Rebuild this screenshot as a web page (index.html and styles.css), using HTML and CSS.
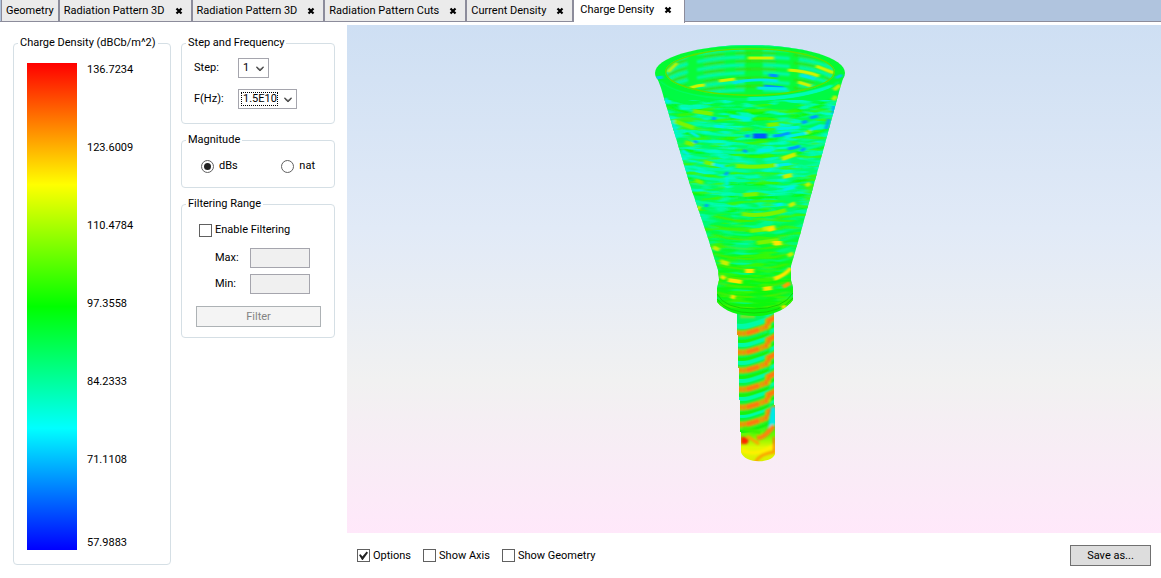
FILE: index.html
```html
<!DOCTYPE html>
<html lang="en">
<head>
<meta charset="utf-8">
<title>Charge Density</title>
<link rel="stylesheet" href="styles.css">
</head>
<body>
<svg class="defs" aria-hidden="true">
  <symbol id="close" viewBox="0 0 8 8"><path d="M1.5 1.5 6.5 6.5M6.5 1.5 1.5 6.5" fill="none" stroke="#000" stroke-width="2.2"/></symbol>
  <symbol id="chevron" viewBox="0 0 8 6"><path d="M.8 .8V2L4 5 7.200 2V.8L4 3.600Z" fill="#555" stroke="#555" stroke-width="1"/></symbol>
</svg>
<nav class="tabs" role="tablist">
  <div class="tab tab-first"><button class="tab-name" role="tab">Geometry</button></div>
  <div class="tab"><button class="tab-name" role="tab">Radiation Pattern 3D</button><button class="tab-close" aria-label="Close"><svg><use href="#close"/></svg></button></div>
  <div class="tab"><button class="tab-name" role="tab">Radiation Pattern 3D</button><button class="tab-close" aria-label="Close"><svg><use href="#close"/></svg></button></div>
  <div class="tab"><button class="tab-name" role="tab">Radiation Pattern Cuts</button><button class="tab-close" aria-label="Close"><svg><use href="#close"/></svg></button></div>
  <div class="tab"><button class="tab-name" role="tab">Current Density</button><button class="tab-close" aria-label="Close"><svg><use href="#close"/></svg></button></div>
  <div class="tab active"><button class="tab-name" role="tab" aria-selected="true">Charge Density</button><button class="tab-close" aria-label="Close"><svg><use href="#close"/></svg></button></div>
</nav>
<main class="workspace">
  <aside class="side">
    <fieldset class="group scale">
      <legend>Charge Density (dBCb/m^2)</legend>
      <div class="scale-body">
        <div class="scale-bar"></div>
        <div class="scale-labels"><span>136.7234</span><span>123.6009</span><span>110.4784</span><span>97.3558</span><span>84.2333</span><span>71.1108</span><span class="scale-min">57.9883</span></div>
      </div>
    </fieldset>
    <div class="controls">
      <fieldset class="group step">
        <legend>Step and Frequency</legend>
        <div class="step-rows">
          <label for="step">Step:</label>
          <span class="combo"><select id="step"><option>1</option></select><svg class="arrow"><use href="#chevron"/></svg></span>
          <label for="freq">F(Hz):</label>
          <span class="combo combo-wide focused"><select id="freq"><option>1.5E10</option></select><svg class="arrow"><use href="#chevron"/></svg></span>
        </div>
      </fieldset>
      <fieldset class="group magnitude">
        <legend>Magnitude</legend>
        <div class="radios">
          <label class="choice"><input type="radio" name="mag" checked>dBs</label>
          <label class="choice"><input type="radio" name="mag">nat</label>
        </div>
      </fieldset>
      <fieldset class="group filtering">
        <legend>Filtering Range</legend>
        <label class="choice"><input type="checkbox">Enable Filtering</label>
        <div class="limits">
          <label for="max">Max:</label><input class="field" id="max" type="text" disabled>
          <label for="min">Min:</label><input class="field" id="min" type="text" disabled>
        </div>
        <button class="button filter" disabled>Filter</button>
      </fieldset>
    </div>
  </aside>
  <section class="viewer">
    <div class="scene">
      <svg class="horn" viewBox="654 40 200 425" role="img" aria-label="Horn antenna charge density">
        <defs>
          <linearGradient id="skin" x1="0" y1="45" x2="0" y2="316" gradientUnits="userSpaceOnUse">
            <stop offset="0" stop-color="#00fb38"/><stop offset=".25" stop-color="#00fb48"/><stop offset=".45" stop-color="#00fb74"/><stop offset=".65" stop-color="#00fb4c"/><stop offset=".85" stop-color="#0cfb10"/><stop offset="1" stop-color="#0cf60c"/>
          </linearGradient>
          <linearGradient id="tube" x1="0" y1="315" x2="0" y2="462" gradientUnits="userSpaceOnUse">
            <stop offset="0" stop-color="#00f860"/><stop offset=".72" stop-color="#08f838"/><stop offset=".82" stop-color="#6cf800"/><stop offset=".9" stop-color="#e0f800"/><stop offset="1" stop-color="#d8f000"/>
          </linearGradient>
          <linearGradient id="fade" x1="0" y1="100" x2="0" y2="290" gradientUnits="userSpaceOnUse">
            <stop offset="0" stop-color="#fff"/><stop offset=".5" stop-color="#ccc"/><stop offset="1" stop-color="#222"/>
          </linearGradient>
          <mask id="upper"><path d="M650 40H850V320H650Z" fill="url(#fade)"/></mask>
          <filter id="soft" x="-10%" y="-10%" width="120%" height="120%"><feGaussianBlur stdDeviation="3 .5"/></filter>
          <filter id="spot" x="-10%" y="-10%" width="120%" height="120%"><feGaussianBlur stdDeviation="1.8 .7"/></filter>
          <filter id="fine" x="-10%" y="-10%" width="120%" height="120%"><feGaussianBlur stdDeviation=".8"/></filter>
          <filter id="cool" x="0" y="0" width="100%" height="100%" color-interpolation-filters="sRGB"><feTurbulence type="fractalNoise" baseFrequency=".045 .2" numOctaves="2" seed="4"/><feColorMatrix values="0 0 0 0 0  0 0 0 0 .98  0 0 0 0 .86  5 0 0 0 -2.3"/></filter>
          <filter id="warm" x="0" y="0" width="100%" height="100%" color-interpolation-filters="sRGB"><feTurbulence type="fractalNoise" baseFrequency=".04 .22" numOctaves="2" seed="11"/><feColorMatrix values="0 0 0 0 .25  0 0 0 0 .97  0 0 0 0 0  5 0 0 0 -2.6"/></filter>
          <clipPath id="body"><path d="M655 72C657 88 690 98 750 98S842 88 845 72L839 92 814 184 800 235 791 266 791 280 793 287V300C786 310 772 316 755 316S724 311 717 302V288L719 280 718 270 707 235 690 185 661 88Z"/></clipPath>
          <clipPath id="rim"><ellipse cx="750" cy="73" rx="95" ry="28"/></clipPath>
          <clipPath id="inside"><ellipse cx="750" cy="72" rx="85" ry="24"/></clipPath>
          <clipPath id="stem"><path d="M737 312H774V405H775V454C772 464 744 464 741 452V432H740V400H739V368H738V335H737Z"/></clipPath>
          <path id="ring" d="M648 0Q665 26 750 27T852 -3"/>
          <path id="ringlow" d="M690 0Q713 18 753 18T818 -5"/>
          <path id="back" d="M664 18C682 -4 815 -7 836 15"/>
          <path id="turn" d="M733 1Q741 4 751 1T763 -3L768 -5V-10L778 -15"/>
        </defs>
        <g clip-path="url(#stem)">
          <path d="M730 310H780V465H730Z" fill="url(#tube)"/>
          <g fill="none" stroke="#00fba8" stroke-width="5" filter="url(#spot)">
            <use href="#turn" y="324"/><use href="#turn" y="342"/><use href="#turn" y="360"/><use href="#turn" y="378"/><use href="#turn" y="396"/><use href="#turn" y="413"/>
          </g>
          <g fill="none" stroke="#18f410" stroke-width="3" filter="url(#spot)">
            <use href="#turn" y="339"/><use href="#turn" y="357"/><use href="#turn" y="375"/><use href="#turn" y="393"/><use href="#turn" y="411"/><use href="#turn" y="429"/>
          </g>
          <g fill="none" stroke="#a8ec00" stroke-width="6" filter="url(#fine)">
            <use href="#turn" y="331"/><use href="#turn" y="350"/><use href="#turn" y="368"/><use href="#turn" y="387"/><use href="#turn" y="405"/><use href="#turn" y="422"/>
          </g>
          <g fill="none" stroke="#ff7808" stroke-width="5" stroke-dasharray="3 1 4 1 3 1 14 1" filter="url(#fine)">
            <use href="#turn" y="331"/><use href="#turn" y="350"/><use href="#turn" y="368"/><use href="#turn" y="387"/><use href="#turn" y="405"/><use href="#turn" y="422"/>
          </g>
          <g filter="url(#fine)">
            <path d="M740 315h15v3h-15z" fill="#8cdb28"/>
            <path d="M771 407h5v17l-8 4z" fill="#00e8e8"/>
            <path d="M757 438q9-2 11-6l6-6" fill="none" stroke="#ff8208" stroke-width="5"/>
            <path d="M743 429q12 1 18 5" fill="none" stroke="#3cf400" stroke-width="4"/>
            <path d="M741 437h4l4 3-2 4h-6z" fill="#ff2800"/>
            <path d="M747 436l12 8" fill="none" stroke="#ffa400" stroke-width="3"/>
            <path d="M741 450q15 7 33-4" fill="none" stroke="#fff000" stroke-width="4"/>
            <path d="M755 463q5-10 20-11" fill="none" stroke="#ffa000" stroke-width="3"/>
            <path d="M774 437v14" stroke="#ff6a10" stroke-width="2"/>
          </g>
        </g>
        <g clip-path="url(#body)">
          <path d="M650 45H850V320H650Z" fill="url(#skin)"/>
          <g fill="none" filter="url(#soft)">
            <g stroke="#00fba0" stroke-width="3" stroke-dasharray="38 9 61 17 22 13">
              <use href="#ring" y="93"/><use href="#ring" y="101"/><use href="#ring" y="109"/><use href="#ring" y="117"/><use href="#ring" y="126"/><use href="#ring" y="135"/><use href="#ring" y="144"/><use href="#ring" y="154"/><use href="#ring" y="168"/><use href="#ring" y="179"/>
            </g>
            <g stroke="#00f8d0" stroke-width="2" stroke-dasharray="18 35 28 12 9 47" stroke-dashoffset="14">
              <use href="#ring" y="88"/><use href="#ring" y="98"/><use href="#ring" y="106"/><use href="#ring" y="122" stroke-dashoffset="70"/><use href="#ring" y="139"/><use href="#ring" y="149"/><use href="#ring" y="161"/>
            </g>
            <g stroke="#08fa10" stroke-width="3" stroke-dasharray="29 18 55 23 12 8" stroke-dashoffset="40">
              <use href="#ring" y="86"/><use href="#ring" y="92"/><use href="#ring" y="112"/><use href="#ring" y="129"/><use href="#ring" y="157"/><use href="#ring" y="171"/><use href="#ring" y="184"/>
            </g>
            <g stroke="#00fb80" stroke-width="2" stroke-dasharray="32 14 19 26">
              <use href="#ringlow" y="199"/><use href="#ringlow" y="208"/><use href="#ringlow" y="217"/><use href="#ringlow" y="226"/><use href="#ringlow" y="236"/><use href="#ringlow" y="246"/><use href="#ringlow" y="256"/><use href="#ringlow" y="273"/><use href="#ringlow" y="285"/>
            </g>
            <g stroke="#48ee00" stroke-width="2" stroke-dasharray="25 22 41 9" stroke-dashoffset="20">
              <use href="#ringlow" y="203"/><use href="#ringlow" y="213"/><use href="#ringlow" y="222"/><use href="#ringlow" y="231"/><use href="#ringlow" y="241"/><use href="#ringlow" y="251"/><use href="#ringlow" y="261"/><use href="#ringlow" y="269"/><use href="#ringlow" y="279"/><use href="#ringlow" y="290"/>
            </g>
          </g>
          <g mask="url(#upper)"><rect x="650" y="100" width="200" height="200" filter="url(#cool)" opacity=".8"/></g>
          <rect x="650" y="104" width="200" height="200" filter="url(#warm)" opacity=".8"/>
          <path d="M717 294Q725 309 754 309T793 293M717 299Q727 313 754 313T794 297" fill="none" stroke="#10d408" stroke-width="1"/>
          <g fill="none" filter="url(#spot)">
            <g stroke="#0098ff" stroke-width="3">
              <path d="M753 136h14" stroke="#0058ff" stroke-width="5"/><path d="M745 136h5M773 136q8 0 17-3M810 118l8-2M834 106v8M829 119l-3 10M802 123l5-2M743 150l4 2M788 149q7-1 12-3M801 151l4-3M725 175l3-3M712 118l4 1M694 141l3 2M705 205l3 1"/>
            </g>
            <g stroke="#00eee8" stroke-width="3">
              <path d="M665 98l4 5M672 120l4 12M714 126l11 1M730 116l20 3M776 129l24-2M785 137l22-4M690 132l9 5M682 150l7 5M712 164l13 3M758 151l13-1M770 166l20-2M727 178v7M810 130l12-5M783 190l12-3M776 205l7-1"/>
            </g>
            <g stroke="#7cf400" stroke-width="4">
              <path d="M693 111l20 3M767 125l12-1M674 121l20 7M806 133l5-2M736 166q21 2 40-1M704 162l9 2M685 142l9 3M695 180l8 3M743 195l15-1M742 214q22 3 44-4M750 231l19-2M757 243l22-3M720 260l8 4"/>
            </g>
            <g stroke="#caf000" stroke-width="4">
              <path d="M834 90l6-5M833 100l3-4M782 159l14-5M783 177l9-2M806 186l4-3M697 207l3 2M789 206l6-3M763 229l12-2M713 247l6 3M774 244l8-1M788 256l5-3M721 262l8 2"/>
            </g>
            <g stroke="#ffe500" stroke-width="4">
              <path d="M745 271h9M773 243h8M721 276l4 3M728 280l14 2M763 289l9-1M731 296l4 2M782 308l4-2M774 279q10-3 17-11M768 230l7-2"/>
            </g>
            <path d="M783 287l7-4" stroke="#ff9d00" stroke-width="4"/>
          </g>
        </g>
        <g clip-path="url(#rim)">
          <path d="M650 40H850V105H650Z" fill="#04fb32"/>
          <g filter="url(#spot)" fill="none">
            <path d="M659 61Q682 45 748 45T841 61" stroke="#00f8a0" stroke-width="2"/>
            <path d="M659 82Q678 100 750 100T839 82" stroke="#00fb60" stroke-width="4"/>
            <path d="M748 99q50 0 84-13" stroke="#00fbb8" stroke-width="4"/>
            <path d="M656 78l7-1M836 78l6-3" stroke="#00c8f8" stroke-width="3"/>
          </g>
        </g>
        <g clip-path="url(#inside)">
          <path d="M660 45H840V100H660Z" fill="#08fb38"/>
          <g fill="none" filter="url(#fine)">
            <g stroke="#00f8b8" stroke-width="3" stroke-dasharray="27 9 48 18">
              <use href="#back" y="49"/><use href="#back" y="57"/><use href="#back" y="65"/><use href="#back" y="73"/><use href="#back" y="82"/><use href="#back" y="90"/>
            </g>
            <g stroke="#3cdc08" stroke-width="2" stroke-dasharray="40 18 21 11" stroke-dashoffset="15">
              <use href="#back" y="53"/><use href="#back" y="61"/><use href="#back" y="69"/><use href="#back" y="78"/><use href="#back" y="86"/>
            </g>
          </g>
          <g fill="none" filter="url(#spot)">
            <path d="M748 58h26M788 70q18 1 31 6M816 66l18 7M719 81l16-2M798 82l13 4M690 88q8-3 15-3M668 72l9-9" stroke="#d0f400" stroke-width="3"/>
            <path d="M769 75l9 1M764 86l20 2" stroke="#0090ff" stroke-width="3"/>
            <path d="M733 83q20-5 45-2M757 88l30 1M801 75l14 4" stroke="#00e8e8" stroke-width="3"/>
          </g>
          <ellipse cx="750" cy="72" rx="85" ry="24" fill="none" stroke="#58e400" stroke-width="3"/>
        </g>
      </svg>
    </div>
    <div class="footer">
      <label class="choice"><input type="checkbox" checked>Options</label>
      <label class="choice"><input type="checkbox">Show Axis</label>
      <label class="choice"><input type="checkbox">Show Geometry</label>
      <button class="button save">Save as...</button>
    </div>
  </section>
</main>
</body>
</html>
```
FILE: styles.css
```css
* { box-sizing: border-box; }
body {
  margin: 0;
  min-height: 100vh;
  display: flex;
  flex-direction: column;
  background: #fff;
  color: #000;
  font: 11px/14px Roboto, "Noto Sans", sans-serif;
}
button, input, select { font: inherit; color: inherit; }
.defs { position: absolute; width: 0; height: 0; }

.tabs {
  display: flex;
  height: 22px;
  padding-left: 1px;
  background: #b0c4de;
  box-shadow: inset 0 -1px #8c8c9b;
}
.tab {
  display: flex;
  align-items: center;
  gap: 10px;
  padding: 0 8px 0 4px;
  background: #ebebeb;
  border-right: 2px solid #8c8c9b;
  border-bottom: 1px solid #8c8c9b;
}
.tab-first { padding-right: 4px; border-left: 1px solid #8c8c9b; }
.tab.active { height: 23px; padding: 0 12px 3px 6px; background: #fff; border-right-width: 1px; border-bottom: 0; }
.tab-name, .tab-close { padding: 0; border: 0; background: none; white-space: nowrap; }
.tab-close { display: flex; }
.tab-close svg { width: 8px; height: 8px; }

.workspace { flex: 1; display: flex; padding-top: 3px; }
.side { display: flex; gap: 10px; padding: 11px 12px 13px 13px; }
.group { margin: 0; padding: 0; border: 1px solid #d5dfe5; border-radius: 4px; min-width: 0; }
.group legend { margin-left: 4px; padding: 0 2px; white-space: nowrap; }
.scale { width: 158px; }
.scale-body { display: flex; gap: 10px; height: 100%; padding: 13px 13px 14px; }
.scale-bar { width: 50px; background: linear-gradient(#f00, #ff0 25%, #0f0 50%, #0ff 75%, #00f); }
.scale-labels { display: flex; flex-direction: column; gap: 64px; }
.scale-min { margin-top: auto; }

.controls { width: 154px; display: flex; flex-direction: column; gap: 9px; }
.step-rows { display: grid; grid-template-columns: 44px 1fr; row-gap: 11px; align-items: center; padding: 8px 12px 14px; }
.combo { position: relative; width: 31px; height: 20px; }
.combo-wide { width: 59px; }
.combo select { appearance: none; width: 100%; height: 100%; padding: 0 0 0 4px; border: 1px solid #a5a5ad; border-radius: 0; background: #fff; }
.arrow { position: absolute; right: 5px; top: 8px; width: 8px; height: 6px; pointer-events: none; }
.focused::after { content: ""; position: absolute; inset: 3px 19px 3px 3px; border: 1px dotted #000; pointer-events: none; }

.choice { display: flex; align-items: center; gap: 3px; white-space: nowrap; }
.choice input { appearance: none; flex: none; margin: 0; width: 13px; height: 13px; border: 1px solid #606060; background: #fff; display: grid; place-items: center; }
.choice input[type="radio"] { border-radius: 50%; }
.choice input[type="radio"]:checked::before { content: ""; width: 7px; height: 7px; border-radius: 50%; background: #222; }
.choice input[type="checkbox"]:checked::before { content: ""; width: 9px; height: 9px; background: #222; clip-path: polygon(0 45%, 18% 35%, 38% 60%, 85% 5%, 100% 20%, 42% 100%, 34% 100%); }
.radios { display: flex; justify-content: space-between; padding: 12px 19px 14px; }
.radios .choice { gap: 5px; }

.filtering .choice { padding: 12px 17px 0; }
.limits { display: grid; grid-template-columns: 35px 60px; row-gap: 6px; align-items: center; padding: 11px 0 12px 33px; }
.field { width: 100%; height: 20px; padding: 0 3px; border: 1px solid #a5a5ad; background: #f0f0f0; }
.button { height: 21px; padding: 0; border: 1px solid #707070; background: #ddd; }
.filter { display: block; width: 125px; margin: 0 14px 10px; border-color: #adb2b5; background: #f4f4f4; color: #838383; }

.viewer { flex: 1; display: flex; flex-direction: column; min-width: 0; }
.scene { flex: 1; display: flex; justify-content: center; align-items: flex-start; padding-top: 15px; background: linear-gradient(#cedff3, #e1eaf7 40%, #f1f1f1 70%, #ffe8fa); }
.horn { width: 200px; height: 425px; }
.footer { display: flex; align-items: center; gap: 12px; height: 45px; padding: 0 10px; }
.save { width: 81px; margin-left: auto; }
```
